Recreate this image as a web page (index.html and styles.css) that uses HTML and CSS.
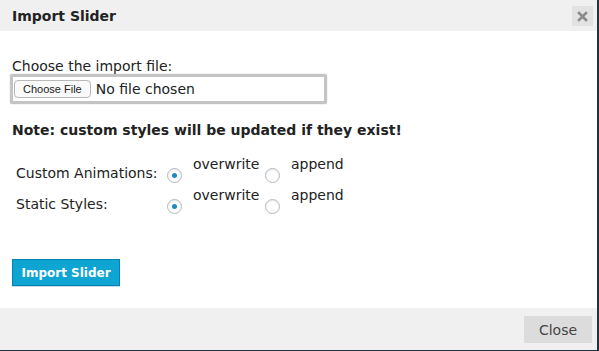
FILE: index.html
```html
<!DOCTYPE html>
<html lang="en">
<head>
    <meta charset="UTF-8">
    <meta name="viewport" content="width=device-width, initial-scale=1.0">
    <title>Import Slider</title>
    <link rel="stylesheet" href="styles.css">
</head>
<body>
    <div class="dialog">
        <div class="dialog-header">
            <span class="dialog-title">Import Slider</span>
            <span class="close-x">
                <svg width="11" height="11" viewBox="0 0 11 11">
                    <path d="M2 2 L9 9 M9 2 L2 9" stroke="#8a8a8a" stroke-width="2.6" stroke-linecap="square"/>
                </svg>
            </span>
        </div>

        <div class="dialog-body">
            <div class="field-label">Choose the import file:</div>
            <div class="file-box">
                <span class="file-button">Choose File</span>
                <span class="file-name">No file chosen</span>
            </div>

            <div class="note">Note: custom styles will be updated if they exist!</div>

            <!-- overwrite / append choices -->
            <div class="options">
                <div class="option-row">
                    <span class="option-label">Custom Animations:</span>
                    <label class="option">
                        <input type="radio" name="anim" checked>
                        <span>overwrite</span>
                    </label>
                    <label class="option">
                        <input type="radio" name="anim">
                        <span>append</span>
                    </label>
                </div>
                <div class="option-row">
                    <span class="option-label">Static Styles:</span>
                    <label class="option">
                        <input type="radio" name="static" checked>
                        <span>overwrite</span>
                    </label>
                    <label class="option">
                        <input type="radio" name="static">
                        <span>append</span>
                    </label>
                </div>
            </div>

            <button class="import-btn">Import Slider</button>
        </div>

        <div class="dialog-footer">
            <button class="close-btn">Close</button>
        </div>
    </div>
</body>
</html>
```

FILE: styles.css
```css
body {
    margin: 0;
    background-color: #1f3340;
    font-family: "DejaVu Sans", Verdana, sans-serif;
    color: #222;
}
.dialog {
    width: 597px;
    height: 350px;
    background-color: #fff;
    display: flex;
    flex-direction: column;
}
.dialog-header {
    height: 31px;
    background-color: #f0f0f0;
    display: flex;
    align-items: center;
    justify-content: space-between;
    padding: 0 4px 0 12px;
}
.dialog-title {
    font-size: 14px;
    font-weight: bold;
    color: #222;
}
.close-x {
    width: 21px;
    height: 20px;
    margin-top: 1px;
    background-color: #e2e2e2;
    display: flex;
    justify-content: center;
    align-items: center;
}
.dialog-body {
    flex: 1;
    padding: 27px 12px 0 12px;
}
.field-label {
    font-size: 14px;
    line-height: 16px;
}
.file-box {
    width: 310px;
    height: 24px;
    margin-left: -2px;
    border: 3px solid #c4c4c4;
    border-radius: 2px;
    box-shadow: 0 0 1px #999;
    display: flex;
    align-items: center;
    padding-left: 1px;
}
.file-button {
    font-family: "Liberation Sans", Arial, sans-serif;
    font-size: 11px;
    padding: 2px 8px 2px 8px;
    border: 1px solid #b8b8b8;
    border-radius: 4px;
    background-color: #fafafa;
    color: #222;
}
.file-name {
    font-size: 14px;
    margin-left: 5px;
}
.note {
    font-size: 14px;
    font-weight: bold;
    margin-top: 18px;
}
.options {
    margin-top: 18px;
}
.option-row {
    display: flex;
    align-items: flex-start;
    height: 31px;
    padding-left: 4px;
    font-size: 14px;
}
.option-label {
    width: 151px;
    padding-top: 9px;
}
.option {
    width: 98px;
    display: flex;
    align-items: flex-start;
}
.option span {
    margin-left: 11px;
}
.option input {
    appearance: none;
    width: 15px;
    height: 15px;
    margin: 12px 0 0 0;
    border: 1px solid #b4b9be;
    border-radius: 50%;
    background-color: #fff;
    box-shadow: inset 0 1px 2px rgba(0, 0, 0, 0.1);
    display: flex;
    justify-content: center;
    align-items: center;
}
.option input:checked::before {
    content: "";
    width: 5px;
    height: 5px;
    border-radius: 50%;
    background-color: #1e8cbe;
}
.import-btn {
    display: block;
    margin-top: 41px;
    width: 108px;
    height: 27px;
    font-family: "DejaVu Sans", Verdana, sans-serif;
    font-size: 12px;
    font-weight: bold;
    color: #fff;
    background-color: #0ea5d3;
    border: 1px solid #0880b0;
    border-radius: 0;
    box-shadow: 0 1px 0 #c8dbe4;
}
.dialog-footer {
    height: 42px;
    background-color: #f0f0f0;
    display: flex;
    justify-content: flex-end;
    align-items: center;
    padding-right: 5px;
}
.close-btn {
    width: 68px;
    height: 27px;
    font-family: "DejaVu Sans", Verdana, sans-serif;
    font-size: 14px;
    color: #444;
    background-color: #dcdcdc;
    border: none;
    margin-top: 1px;
}
```
